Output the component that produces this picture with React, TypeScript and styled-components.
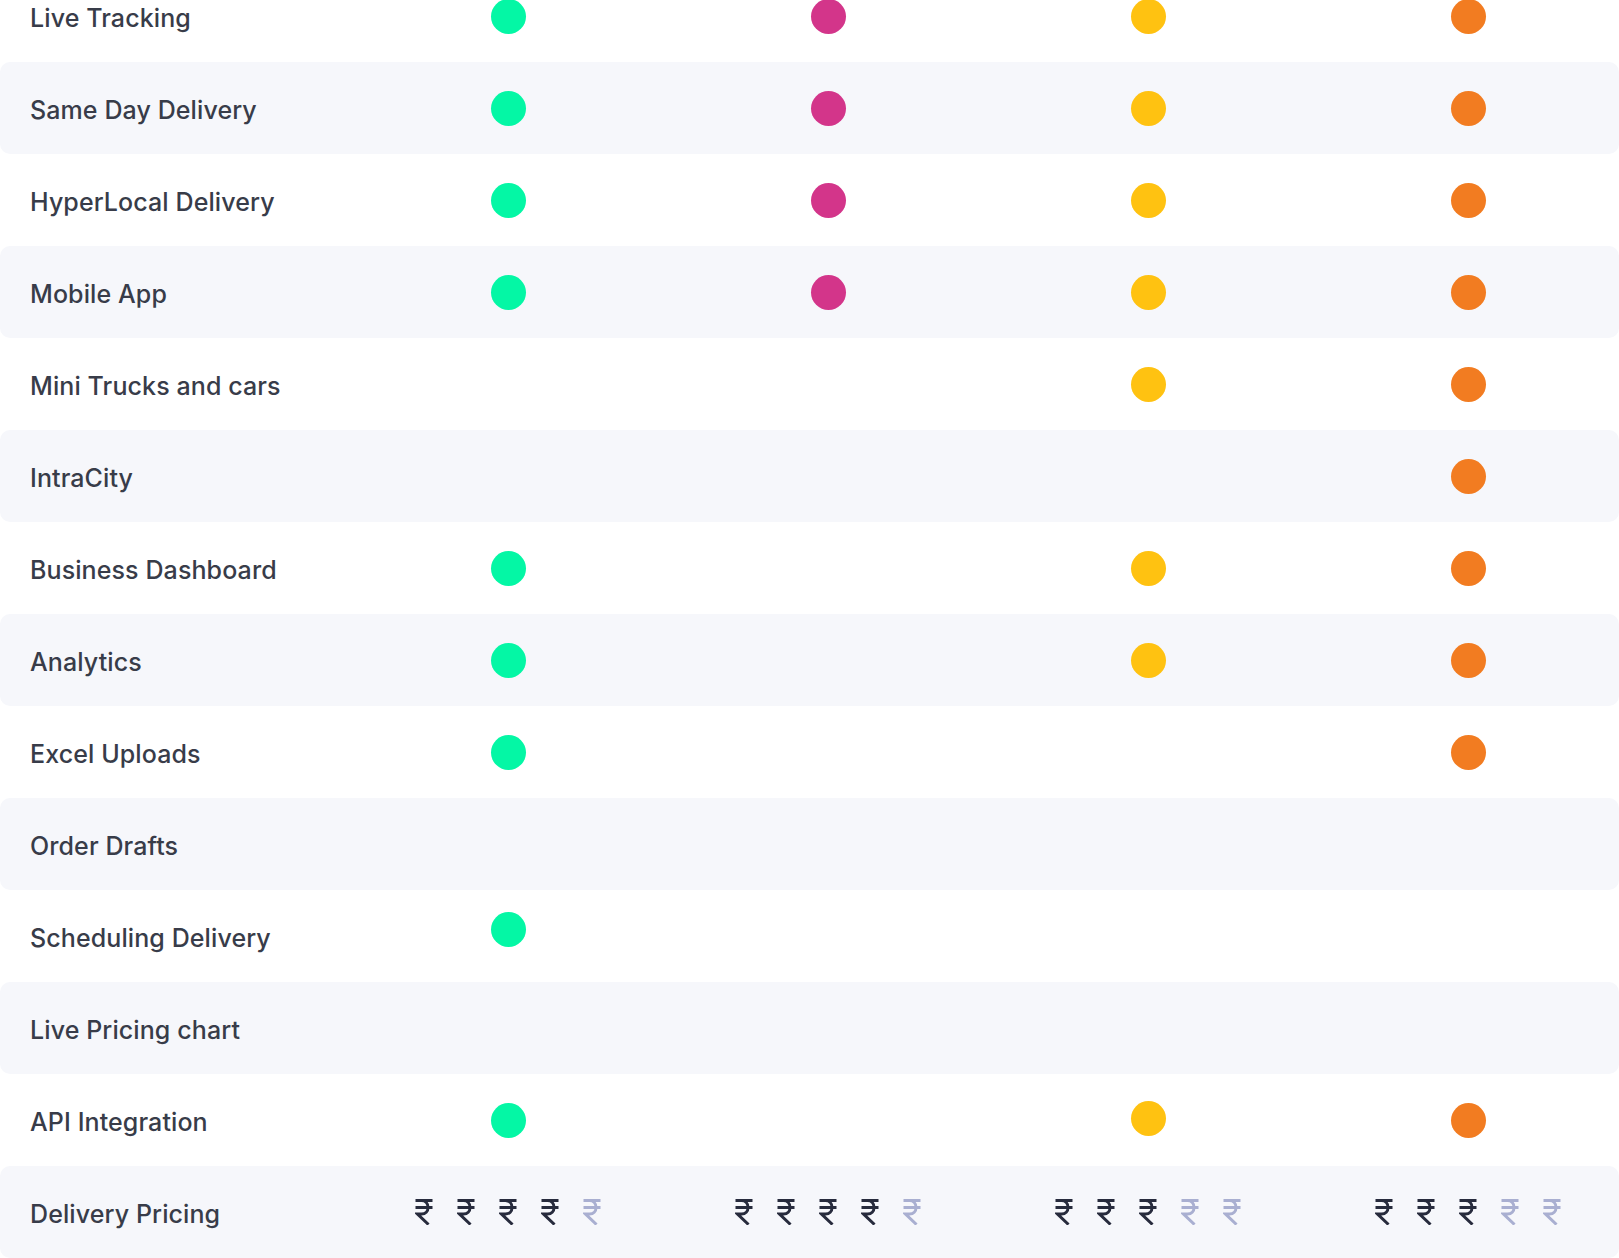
import React from "react";
import styled, { createGlobalStyle } from "styled-components";

// ______________________________________________________
// データ

type Plan = "fleet" | "swift" | "prime" | "max";

type Feature = {
  label: string;
  plans: Plan[];
  lift?: Partial<Record<Plan, number>>;
};

const PLANS: Plan[] = ["fleet", "swift", "prime", "max"];

const DOT_COLORS: Record<Plan, string> = {
  fleet: "#04f7a5",
  swift: "#d3358a",
  prime: "#ffc211",
  max: "#f27c21",
};

const FEATURES: Feature[] = [
  { label: "Live Tracking", plans: ["fleet", "swift", "prime", "max"] },
  { label: "Same Day Delivery", plans: ["fleet", "swift", "prime", "max"] },
  { label: "HyperLocal Delivery", plans: ["fleet", "swift", "prime", "max"] },
  { label: "Mobile App", plans: ["fleet", "swift", "prime", "max"] },
  { label: "Mini Trucks and cars", plans: ["prime", "max"] },
  { label: "IntraCity", plans: ["max"] },
  { label: "Business Dashboard", plans: ["fleet", "prime", "max"] },
  { label: "Analytics", plans: ["fleet", "prime", "max"] },
  { label: "Excel Uploads", plans: ["fleet", "max"] },
  { label: "Order Drafts", plans: [] },
  { label: "Scheduling Delivery", plans: ["fleet"], lift: { fleet: 7 } },
  { label: "Live Pricing chart", plans: [] },
  { label: "API Integration", plans: ["fleet", "prime", "max"], lift: { prime: 2 } },
];

const PRICING: Record<Plan, number> = { fleet: 4, swift: 4, prime: 3, max: 3 };

// ______________________________________________________
// スタイル

const GlobalStyle = createGlobalStyle`
  html, body {
    margin: 0;
    padding: 0;
    background: #ffffff;
    overflow: hidden;
  }
`;

const Table = styled.div`
  margin-top: -30px;
  width: 1619px;
  font-family: Inter, "Noto Sans", sans-serif;
`;

const Row = styled.div<{ $striped: boolean }>`
  display: grid;
  grid-template-columns: 348px repeat(4, 320px);
  align-items: center;
  height: 92px;
  border-radius: 10px;
  overflow: hidden;
  background: ${(p) => (p.$striped ? "#f6f7fb" : "#ffffff")};
`;

const Label = styled.div`
  padding: 3px 0 0 30px;
  font-size: 25px;
  font-weight: 500;
  letter-spacing: 0.1px;
  color: #383c49;
  white-space: nowrap;
`;

const Cell = styled.div`
  display: flex;
  justify-content: center;
  align-items: center;
`;

const Dot = styled.span<{ $color: string; $lift: number }>`
  display: block;
  width: 35px;
  height: 35px;
  border-radius: 50%;
  background: ${(p) => p.$color};
  transform: translateY(${(p) => -p.$lift}px);
`;

const Rupees = styled.div`
  display: flex;
  gap: 24px;
`;

const Rupee = styled.svg<{ $on: boolean }>`
  display: block;
  width: 18px;
  height: 26px;
  color: ${(p) => (p.$on ? "#272b3d" : "#a9afd1")};
`;

// ______________________________________________________
// コンポーネント

const RupeeIcon = ({ on }: { on: boolean }) => (
  <Rupee $on={on} viewBox="0 0 18 26" fill="none">
    <path
      d="M0.5 1.5H17.5 M0.5 8.5H17.5 M0.5 1.5H6.5C10.5 1.5 13 4.5 13 8.5C13 12.5 10.5 15 6.5 15H2.5L13.5 25.5"
      stroke="currentColor"
      strokeWidth="3"
    />
  </Rupee>
);

const App = () => (
  <>
    <GlobalStyle />
    <Table>
      {FEATURES.map((f, i) => (
        <Row key={f.label} $striped={i % 2 === 1}>
          <Label>{f.label}</Label>
          {PLANS.map((plan) => (
            <Cell key={plan}>
              {f.plans.includes(plan) && (
                <Dot $color={DOT_COLORS[plan]} $lift={f.lift?.[plan] ?? 0} />
              )}
            </Cell>
          ))}
        </Row>
      ))}
      <Row $striped>
        <Label>Delivery Pricing</Label>
        {PLANS.map((plan) => (
          <Cell key={plan}>
            <Rupees>
              {[0, 1, 2, 3, 4].map((n) => (
                <RupeeIcon key={n} on={n < PRICING[plan]} />
              ))}
            </Rupees>
          </Cell>
        ))}
      </Row>
    </Table>
  </>
);

export default App;
